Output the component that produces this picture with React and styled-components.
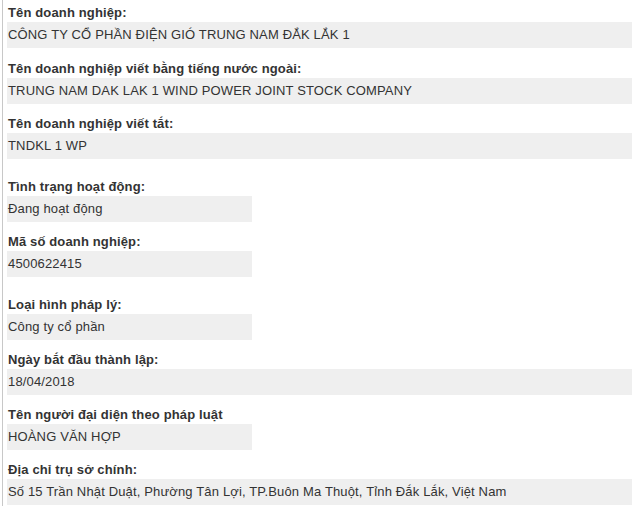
import React from "react";
import styled, { createGlobalStyle } from "styled-components";

const GlobalStyle = createGlobalStyle`
  body {
    margin: 0;
    background: #fff;
    font-family: "Liberation Sans", Arial, sans-serif;
    color: #333;
  }
`;

const Panel = styled.div`
  margin-left: 2px;
  min-height: 506px;
  border-left: 1px solid #c8c8c8;
  padding: 4px 1px 0 4px;
  box-sizing: border-box;
`;

const Field = styled.div`
  margin-top: ${props => props.gap || 0}px;
`;

const Label = styled.div`
  font-size: 13px;
  font-weight: bold;
  line-height: 18px;
  letter-spacing: 0.14px;
  padding-left: 1px;
`;

const Value = styled.div`
  background: #efefef;
  font-size: 13px;
  line-height: 26px;
  height: 26px;
  letter-spacing: 0.15px;
  padding-left: 1px;
  width: ${props => (props.narrow ? "244px" : "auto")};
  white-space: nowrap;
`;

const fields = [
  { label: "Tên doanh nghiệp:", value: "CÔNG TY CỔ PHẦN ĐIỆN GIÓ TRUNG NAM ĐẮK LẮK 1", gap: 0 },
  { label: "Tên doanh nghiệp viết bằng tiếng nước ngoài:", value: "TRUNG NAM DAK LAK 1 WIND POWER JOINT STOCK COMPANY", gap: 12 },
  { label: "Tên doanh nghiệp viết tắt:", value: "TNDKL 1 WP", gap: 11 },
  { label: "Tình trạng hoạt động:", value: "Đang hoạt động", gap: 19, narrow: true },
  { label: "Mã số doanh nghiệp:", value: "4500622415", gap: 11, narrow: true },
  { label: "Loại hình pháp lý:", value: "Công ty cổ phần", gap: 19, narrow: true },
  { label: "Ngày bắt đầu thành lập:", value: "18/04/2018", gap: 11 },
  { label: "Tên người đại diện theo pháp luật", value: "HOÀNG VĂN HỢP", gap: 11, narrow: true },
  { label: "Địa chỉ trụ sở chính:", value: "Số 15 Trần Nhật Duật, Phường Tân Lợi, TP.Buôn Ma Thuột, Tỉnh Đắk Lắk, Việt Nam", gap: 11 },
];

export default function App() {
  return (
    <>
      <GlobalStyle />
      <Panel>
        {fields.map(f => (
          <Field key={f.label} gap={f.gap}>
            <Label>{f.label}</Label>
            <Value narrow={f.narrow}>{f.value}</Value>
          </Field>
        ))}
      </Panel>
    </>
  );
}
